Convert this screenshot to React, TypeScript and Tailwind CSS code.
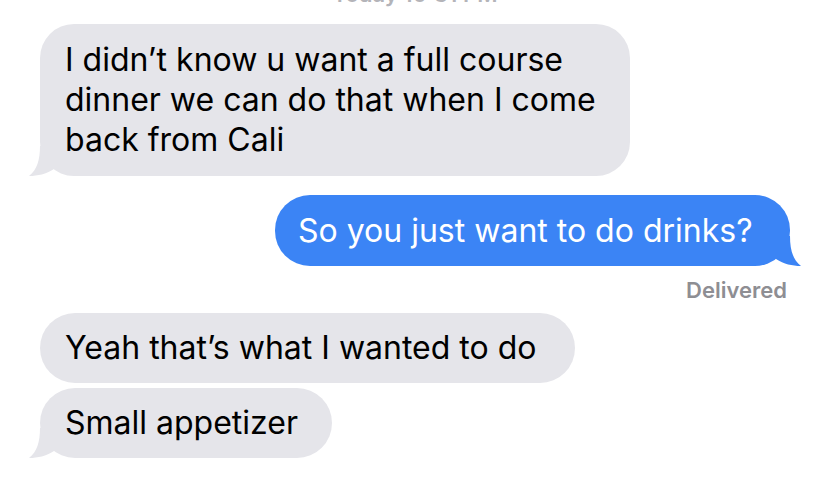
function LeftTail() {
  return (
    <svg className="absolute bottom-0 left-[-12px]" width="30" height="30" viewBox="0 0 30 30">
      <path d="M12 0 C12 14 9 24 1 30 C10 30 18 28 26 23 L26 0 Z" fill="#e5e5ea" />
    </svg>
  )
}

function RightTail() {
  return (
    <svg className="absolute bottom-0 right-[-12px]" width="30" height="30" viewBox="0 0 30 30">
      <path d="M18 0 C18 14 21 24 29 30 C20 30 12 28 4 23 L4 0 Z" fill="#3b84f5" />
    </svg>
  )
}

export default function App() {
  return (
    <div className="w-[828px] h-[485px] overflow-hidden bg-white pl-10 pr-[38px] flex flex-col" style={{ fontFamily: 'Inter, "Noto Sans", sans-serif' }}>
      <div className="-mt-[16px] h-[20px] text-center text-[22px] leading-[20px] font-semibold text-[#b4b4b9]">
        Today 10:31 PM
      </div>

      <div className="mt-[20px] relative w-[590px] rounded-[34px] bg-[#e5e5ea] pl-[25px] pr-4 pt-4 pb-4 text-[32px] leading-[40px] text-black">
        I didn’t know u want a full course<br />
        dinner we can do that when I come<br />
        back from Cali
        <LeftTail />
      </div>

      <div className="mt-[19px] self-end relative w-[515px] h-[71px] rounded-[35px] bg-[#3b84f5] pl-[23px] flex items-center text-[32px] leading-[40px] text-white">
        So you just want to do drinks?
        <RightTail />
      </div>

      <div className="mt-[11px] self-end pr-[3px] text-[22px] leading-[26px] font-semibold text-[#8e8e93]">
        Delivered
      </div>

      <div className="mt-[10px] w-[535px] h-[70px] rounded-[35px] bg-[#e5e5ea] pl-[25px] flex items-center text-[32px] leading-[40px] text-black">
        Yeah that’s what I wanted to do
      </div>

      <div className="mt-[5px] relative w-[292px] h-[70px] rounded-[35px] bg-[#e5e5ea] pl-[25px] flex items-center text-[32px] leading-[40px] text-black">
        Small appetizer
        <LeftTail />
      </div>
    </div>
  )
}
